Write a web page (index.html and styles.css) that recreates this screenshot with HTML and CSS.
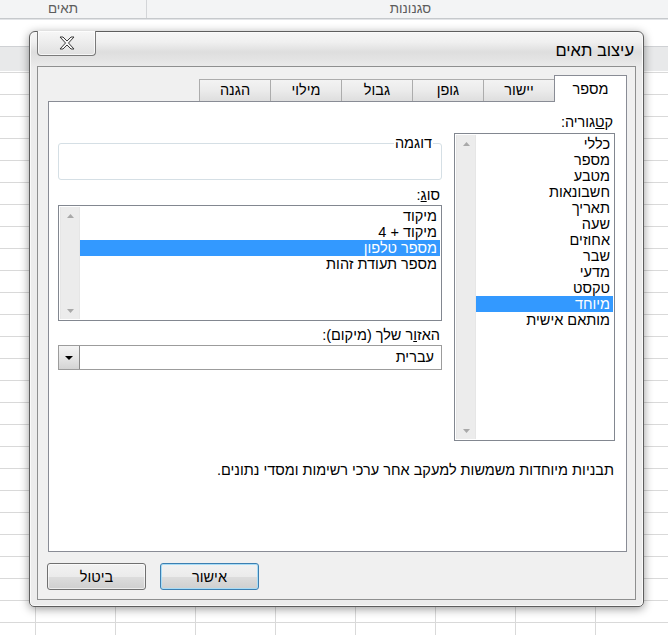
FILE: index.html
```html
<!DOCTYPE html>
<html lang="he">

<head>
    <meta charset="UTF-8">
    <meta name="viewport" content="width=device-width, initial-scale=1.0">
    <title>עיצוב תאים</title>
    <link rel="stylesheet" href="styles.css">
</head>

<body>
    <div class="ribbon">
        <div class="ribbon-group group-cells">תאים</div>
        <div class="ribbon-group group-styles">סגנונות</div>
    </div>
    <div class="formula-area"></div>
    <div class="col-headers"></div>
    <div class="grid"></div>

    <div class="dialog" dir="rtl">
        <div class="titlebar">
            <span class="title">עיצוב תאים</span>
            <button class="close-btn" title="סגור">
                <svg width="16" height="14" viewBox="0 0 16 14">
                    <path d="M1 1h3l4 4l4-4h3l-5.5 6l5.5 6h-3l-4-4l-4 4h-3l5.5-6z" fill="#f6f6f6" stroke="#3a3a3a" stroke-width="1" stroke-linejoin="round"/>
                </svg>
            </button>
        </div>

        <div class="dialog-body">
            <div class="tabs">
                <div class="tab active">מספר</div>
                <div class="tab">יישור</div>
                <div class="tab">גופן</div>
                <div class="tab">גבול</div>
                <div class="tab">מילוי</div>
                <div class="tab">הגנה</div>
            </div>

            <div class="tab-page">
                <div class="columns">
                    <div class="col-category">
                        <div class="field-label">ק<u>ט</u>גוריה:</div>
                        <div class="listbox category-list">
                            <ul class="items">
                                <li>כללי</li>
                                <li>מספר</li>
                                <li>מטבע</li>
                                <li>חשבונאות</li>
                                <li>תאריך</li>
                                <li>שעה</li>
                                <li>אחוזים</li>
                                <li>שבר</li>
                                <li>מדעי</li>
                                <li>טקסט</li>
                                <li class="selected">מיוחד</li>
                                <li>מותאם אישית</li>
                            </ul>
                            <div class="scrollbar">
                                <span class="arrow"><svg width="7" height="4" viewBox="0 0 7 4"><path d="M0 4L3.5 0L7 4z" fill="#a9a9a9"/></svg></span>
                                <span class="arrow"><svg width="7" height="4" viewBox="0 0 7 4"><path d="M0 0L3.5 4L7 0z" fill="#a9a9a9"/></svg></span>
                            </div>
                        </div>
                    </div>

                    <div class="col-details">
                        <fieldset class="sample">
                            <legend>דוגמה</legend>
                        </fieldset>

                        <div class="field-label">סו<u>ג</u>:</div>
                        <div class="listbox type-list">
                            <ul class="items">
                                <li>מיקוד</li>
                                <li>מיקוד + 4</li>
                                <li class="selected">מספר טלפון</li>
                                <li>מספר תעודת זהות</li>
                            </ul>
                            <div class="scrollbar">
                                <span class="arrow"><svg width="7" height="4" viewBox="0 0 7 4"><path d="M0 4L3.5 0L7 4z" fill="#a9a9a9"/></svg></span>
                                <span class="arrow"><svg width="7" height="4" viewBox="0 0 7 4"><path d="M0 0L3.5 4L7 0z" fill="#a9a9a9"/></svg></span>
                            </div>
                        </div>

                        <div class="field-label">האז<u>ו</u>ר שלך (מיקום):</div>
                        <div class="combo">
                            <span class="combo-value">עברית</span>
                            <span class="combo-btn"><svg width="8" height="4" viewBox="0 0 8 4"><path d="M0 0L4 4L8 0z" fill="#000"/></svg></span>
                        </div>
                    </div>
                </div>

                <p class="description">תבניות מיוחדות משמשות למעקב אחר ערכי רשימות ומסדי נתונים.</p>
            </div>

            <div class="buttons">
                <button class="btn btn-default">אישור</button>
                <button class="btn">ביטול</button>
            </div>
        </div>
    </div>
</body>

</html>
```

FILE: styles.css
```css
body {
    margin: 0;
    width: 668px;
    height: 635px;
    overflow: hidden;
    position: relative;
    display: flex;
    flex-direction: column;
    background: #fff;
    font-family: "Liberation Sans", "DejaVu Sans", Arial, sans-serif;
    font-size: 14.5px;
    color: #000;
}

/* excel behind the dialog */

.ribbon {
    display: flex;
    height: 18px;
    background: #f3f4f5;
    border-bottom: 1px solid #c6c9cc;
    color: #5c5c5c;
    font-size: 13.5px;
    line-height: 18px;
}

.ribbon-group {
    text-align: center;
}

.group-cells {
    width: 147px;
    padding-right: 20px;
    box-sizing: border-box;
    border-right: 1px solid #d3d5d8;
}

.group-styles {
    flex: 1;
    padding-left: 6px;
}

.formula-area {
    height: 27px;
    border-top: 1px solid #e2e4e7;
    box-sizing: border-box;
}

.col-headers {
    height: 25px;
    background: #e8e9ea;
    border-top: 1px solid #cfd1d4;
    box-sizing: border-box;
}

.grid {
    flex: 1;
    background-image:
        linear-gradient(to right, #d9d9d9 1px, transparent 1px),
        linear-gradient(to bottom, #d9d9d9 1px, transparent 1px);
    background-size: 80px 22px;
    background-position: 35px 1px;
}

/* dialog */

.dialog {
    position: absolute;
    left: 29px;
    top: 31px;
    width: 615px;
    height: 576px;
    box-sizing: border-box;
    padding: 0 7px 6px;
    display: flex;
    flex-direction: column;
    border: 1px solid #5e5e5e;
    border-radius: 6px 6px 5px 5px;
    background: linear-gradient(to bottom, #f6f6f6 0px, #f0f0f0 10px, #dedede 20px, #e4e4e4 28px, #ececec 36px, #ececec 100%);
    box-shadow: 0 2px 10px rgba(0, 0, 0, 0.4), inset 0 0 0 1px #fafafa;
}

.titlebar {
    height: 34px;
    display: flex;
    justify-content: space-between;
    align-items: flex-start;
}

.title {
    padding-top: 9px;
    padding-right: 2px;
    font-size: 16.5px;
    line-height: 18px;
}

.close-btn {
    margin-top: -1px;
    width: 59px;
    height: 25px;
    padding: 0;
    display: flex;
    align-items: center;
    justify-content: center;
    border: 1px solid #7a7a7a;
    border-top: none;
    border-radius: 0 0 4px 4px;
    background: linear-gradient(to bottom, #f7f7f7, #ececec 50%, #e0e0e0);
    box-shadow: inset 0 0 0 1px rgba(255, 255, 255, 0.7);
}

.dialog-body {
    flex: 1;
    display: flex;
    flex-direction: column;
    padding: 8px 8px 9px 10px;
    border: 1px solid #8e8f8f;
    background: #f0f0f0;
}

.tabs {
    display: flex;
    align-items: flex-end;
    height: 27px;
    margin-bottom: -1px;
    position: relative;
    z-index: 1;
}

.tab {
    width: 71px;
    height: 22px;
    margin-bottom: 1px;
    box-sizing: border-box;
    border: 1px solid #acacac;
    border-bottom: none;
    border-right: none;
    background: linear-gradient(to bottom, #f3f3f3, #ebebeb 50%, #dedede);
    text-align: center;
    line-height: 20px;
}

.tab.active {
    width: 73px;
    height: 27px;
    margin-bottom: 0;
    border: 1px solid #898c95;
    border-bottom: none;
    background: #fff;
    line-height: 26px;
}

.tab-page {
    height: 451px;
    box-sizing: border-box;
    padding: 12px 11px 0 9px;
    border: 1px solid #898c95;
    background: #fff;
}

.columns {
    display: flex;
    gap: 12px;
}

.col-category {
    width: 161px;
}

.col-details {
    width: 384px;
}

.field-label {
    line-height: 16px;
    padding-right: 2px;
}

.listbox {
    display: flex;
    box-sizing: border-box;
    padding: 1px;
    border: 1px solid #828790;
    background: #fff;
}

.category-list {
    height: 308px;
    margin-top: 3px;
}

.type-list {
    height: 116px;
    margin-top: 2px;
}

.items {
    flex: 1;
    list-style: none;
    margin: 1px 0 0;
    padding: 0;
}

.items li {
    height: 16px;
    line-height: 16px;
    padding-right: 3px;
    white-space: nowrap;
}

.items li.selected {
    background: #3399ff;
    color: #fff;
}

.scrollbar {
    width: 20px;
    display: flex;
    flex-direction: column;
    justify-content: space-between;
    box-sizing: border-box;
    border-left: 1px solid #e6e6e6;
    border-right: 1px solid #e6e6e6;
    background: #ececec;
}

.scrollbar .arrow {
    height: 17px;
    display: flex;
    align-items: center;
    justify-content: center;
}

.sample {
    margin: 21px 0 0;
    height: 45px;
    box-sizing: border-box;
    padding: 0 8px;
    border: 1px solid #d5dfe5;
    border-radius: 3px;
}

.sample legend {
    padding: 0 1px;
    line-height: 16px;
}

.col-details .field-label {
    margin-top: 7px;
}

.col-details .type-list + .field-label {
    margin-top: 6px;
}

.combo {
    display: flex;
    height: 25px;
    margin-top: 2px;
    box-sizing: border-box;
    border: 1px solid #9c9c9c;
    background: #fff;
}

.combo-value {
    flex: 1;
    line-height: 23px;
    padding-right: 7px;
}

.combo-btn {
    width: 20px;
    display: flex;
    align-items: center;
    justify-content: center;
    border-right: 1px solid #8a8a8a;
    background: linear-gradient(to bottom, #f4f4f4, #e6e6e6 50%, #d4d4d4);
}

.description {
    margin: 21px 0 0;
    line-height: 16px;
    padding-right: 1px;
}

.buttons {
    display: flex;
    justify-content: flex-end;
    gap: 14px;
    margin-top: 11px;
    margin-left: -1px;
}

.btn {
    width: 99px;
    height: 27px;
    padding: 0;
    font-family: inherit;
    font-size: 14.5px;
    color: #000;
    border: 1px solid #707070;
    border-radius: 3px;
    background: linear-gradient(to bottom, #f2f2f2 0%, #ebebeb 50%, #dddddd 51%, #cfcfcf 100%);
    box-shadow: inset 0 0 0 1px rgba(255, 255, 255, 0.6);
}

.btn-default {
    border-color: #3c7fb1;
    box-shadow: inset 0 0 0 1px #a8dcf6;
}
```
